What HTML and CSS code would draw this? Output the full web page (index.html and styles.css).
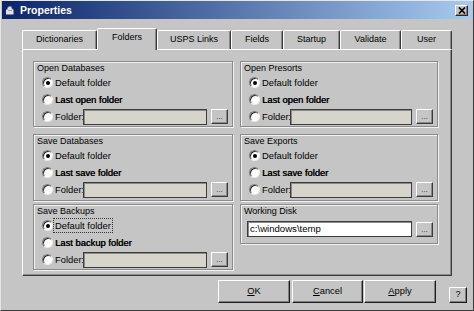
FILE: index.html
```html
<!DOCTYPE html>
<html lang="en">
<head>
    <meta charset="UTF-8">
    <title>Properties</title>
    <link rel="stylesheet" href="styles.css">
</head>
<body>

    <div class="window">
        <div class="titlebar">
            <svg class="app-icon" viewBox="0 0 9 9"><path d="M1 3.5h1.5V1.5h1v-1h3v2h1v1h1v5h-7.5z" fill="#e2e2e2"/><path d="M3 4.5h4" stroke="#9a9a9a" stroke-width="1"/></svg>
            <span class="title">Properties</span>
            <div class="close"><svg width="8" height="7" viewBox="0 0 8 7"><path d="M1 0.5l6 6M7 0.5l-6 6" stroke="#000" stroke-width="1.7"/></svg></div>
        </div>

        <div class="tabs">
            <div class="tab t-dict">Dictionaries</div>
            <div class="tab t-fold active">Folders</div>
            <div class="tab t-usps">USPS Links</div>
            <div class="tab t-fields">Fields</div>
            <div class="tab t-start">Startup</div>
            <div class="tab t-valid">Validate</div>
            <div class="tab t-user">User</div>
        </div>

        <div class="panel">
            <div class="col col-left">
                <div class="group">
                    <div class="group-label">Open Databases</div>
                    <div class="opt"><span class="radio on"></span><span class="opt-text">Default folder</span></div>
                    <div class="opt"><span class="radio"></span><span class="opt-text heavy">Last open folder</span></div>
                    <div class="opt"><span class="radio"></span><span class="folder-lbl">Folder:</span><span class="field"></span><span class="browse">...</span></div>
                </div>
                <div class="group tall gap-lg">
                    <div class="group-label">Save Databases</div>
                    <div class="opt"><span class="radio on"></span><span class="opt-text">Default folder</span></div>
                    <div class="opt"><span class="radio"></span><span class="opt-text heavy">Last save folder</span></div>
                    <div class="opt"><span class="radio"></span><span class="folder-lbl">Folder:</span><span class="field"></span><span class="browse">...</span></div>
                </div>
                <div class="group gap-sm">
                    <div class="group-label">Save Backups</div>
                    <div class="opt"><span class="radio on"></span><span class="opt-text focus">Default folder</span></div>
                    <div class="opt"><span class="radio"></span><span class="opt-text heavy">Last backup folder</span></div>
                    <div class="opt"><span class="radio"></span><span class="folder-lbl">Folder:</span><span class="field"></span><span class="browse">...</span></div>
                </div>
            </div>

            <div class="col col-right">
                <div class="group">
                    <div class="group-label">Open Presorts</div>
                    <div class="opt"><span class="radio on"></span><span class="opt-text">Default folder</span></div>
                    <div class="opt"><span class="radio"></span><span class="opt-text heavy">Last open folder</span></div>
                    <div class="opt"><span class="radio"></span><span class="folder-lbl">Folder:</span><span class="field"></span><span class="browse">...</span></div>
                </div>
                <div class="group tall gap-lg">
                    <div class="group-label">Save Exports</div>
                    <div class="opt"><span class="radio on"></span><span class="opt-text">Default folder</span></div>
                    <div class="opt"><span class="radio"></span><span class="opt-text heavy">Last save folder</span></div>
                    <div class="opt"><span class="radio"></span><span class="folder-lbl">Folder:</span><span class="field"></span><span class="browse">...</span></div>
                </div>
                <div class="group short gap-sm">
                    <div class="group-label">Working Disk</div>
                    <div class="disk-row"><span class="field white">c:\windows\temp</span><span class="browse">...</span></div>
                </div>
            </div>
        </div>

        <div class="buttons">
            <div class="btn"><u>O</u>K</div>
            <div class="btn btn-cancel"><u>C</u>ancel</div>
            <div class="btn btn-apply"><u>A</u>pply</div>
            <div class="btn btn-help">?</div>
        </div>
    </div>

</body>
</html>
```

FILE: styles.css
```css
/* 1. Base - classic dialog gray */
body {
    margin: 0;
    background: #c5c5c5;
    font-family: "Liberation Sans", Arial, sans-serif;
    font-size: 9.3px;
    color: #000;
}

.window {
    width: 474px;
    height: 311px;
    box-sizing: border-box;
    border: 1px solid;
    border-color: #e6e6e6 #3a3a3a #3a3a3a #e6e6e6;
    padding: 0 1px;
    background: #c5c5c5;
    overflow: hidden;
}

/* 2. Title bar */
.titlebar {
    height: 18px;
    display: flex;
    align-items: center;
    background: linear-gradient(to right, #0a246a, #a6caf0);
    color: #fff;
}

.app-icon { width: 9px; height: 9px; margin: 0 6px 0 3px; }

.title { font-weight: bold; font-size: 10.5px; }

.close {
    margin-left: auto;
    margin-right: 4px;
    width: 13px;
    height: 11px;
    box-sizing: border-box;
    background: #c5c5c5;
    border: 1px solid;
    border-color: #fff #2a2a2a #2a2a2a #fff;
    box-shadow: inset -1px -1px 0 #808080;
    display: flex;
    align-items: center;
    justify-content: center;
}

/* 3. Tabs */
.tabs {
    display: flex;
    align-items: flex-end;
    width: 430px;
    height: 21px;
    margin: 9px 0 0 20px;
    position: relative;
    z-index: 1;
}

.tab {
    box-sizing: border-box;
    height: 19px;
    line-height: 17px;
    text-align: center;
    font-size: 9px;
    border: 1px solid;
    border-bottom: none;
    border-color: #fff #3a3a3a transparent #fff;
    box-shadow: inset -1px 0 0 #8a8a8a;
    border-radius: 2px 2px 0 0;
}

.tab.active {
    height: 22px;
    margin-bottom: -1px;
    padding-bottom: 4px;
    background: #c5c5c5;
}

.t-dict { width: 75px; }
.t-fold { width: 60px; }
.t-usps { width: 74px; }
.t-fields { width: 52px; }
.t-start { width: 57px; }
.t-valid { width: 61px; }
.t-user { width: 51px; }

/* 4. Tab page */
.panel {
    box-sizing: border-box;
    width: 430px;
    height: 227px;
    margin-left: 20px;
    border: 1px solid;
    border-color: #fff #3a3a3a #3a3a3a #fff;
    box-shadow: inset -1px -1px 0 #8a8a8a;
    padding: 11px 0 0 10px;
    display: flex;
    gap: 7px;
}

.col { display: flex; flex-direction: column; }
.col-left { width: 200px; }
.col-right { width: 198px; }

/* 5. Group boxes (etched) */
.group {
    box-sizing: border-box;
    height: 66px;
    border: 1px solid #8a8a8a;
    box-shadow: inset 1px 1px 0 #f2f2f2, 1px 1px 0 #f2f2f2;
    padding: 1px 4px 0 0;
}
.group.tall { height: 67px; }
.group.short { height: 40px; }
.gap-lg { margin-top: 7px; }
.gap-sm { margin-top: 3px; }

.group-label { line-height: 11px; padding-left: 3px; font-size: 9px; }

.opt {
    display: flex;
    align-items: center;
    height: 17px;
    padding-left: 8px;
}

.opt-text { margin-left: 2px; line-height: 11px; font-size: 9.4px; }
.opt-text.heavy { text-shadow: 0.4px 0 0 #000; }
.opt-text.focus { outline: 1px dotted #333; outline-offset: 1px; }

.radio {
    position: relative;
    width: 11px;
    height: 11px;
    flex: none;
    box-sizing: border-box;
    border-radius: 50%;
    background: #fff;
    border: 1px solid;
    border-color: #7a7a7a #ececec #ececec #7a7a7a;
    box-shadow: inset 1px 1px 0 #2e2e2e;
}
.radio.on::after {
    content: '';
    position: absolute;
    left: 3px;
    top: 3px;
    width: 4px;
    height: 4px;
    border-radius: 50%;
    background: #000;
}

.folder-lbl { width: 28px; margin-left: 2px; font-size: 9.4px; }

/* 6. Text fields and browse buttons */
.field {
    flex: 1;
    height: 16px;
    box-sizing: border-box;
    background: #d7d4cb;
    border: 1px solid #3c3c3c;
    box-shadow: inset 1px 1px 0 #8a8a8a;
}
.field.white {
    background: #fff;
    padding-left: 2px;
    font-size: 9.6px;
    line-height: 14px;
}

.browse {
    width: 17px;
    height: 15px;
    flex: none;
    box-sizing: border-box;
    margin-left: 4px;
    border: 1px solid;
    border-color: #fff #3a3a3a #3a3a3a #fff;
    box-shadow: inset -1px -1px 0 #8a8a8a;
    font-size: 8px;
    line-height: 13px;
    text-align: center;
    color: #333;
}

.disk-row {
    display: flex;
    align-items: center;
    padding-left: 6px;
    margin-top: 4px;
}

/* 7. Dialog buttons */
.buttons {
    display: flex;
    align-items: flex-end;
    justify-content: flex-end;
    padding-right: 5px;
    margin-top: 4px;
}

.btn {
    width: 72px;
    height: 23px;
    box-sizing: border-box;
    border: 1px solid;
    border-color: #fff #1e1e1e #1e1e1e #fff;
    box-shadow: inset -1px -1px 0 #808080;
    line-height: 20px;
    text-align: center;
}
.btn-cancel { width: 71px; margin-left: 2px; }
.btn-apply { margin-left: 1px; }
.btn-help { width: 18px; height: 16px; line-height: 13px; margin-left: 13px; font-size: 9px; }
```
